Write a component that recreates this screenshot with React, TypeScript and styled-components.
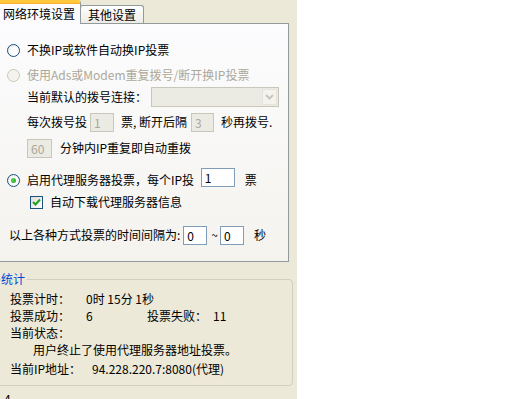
import styled, { createGlobalStyle } from "styled-components";

const GlobalStyle = createGlobalStyle`
  html, body {
    margin: 0;
    padding: 0;
    background: #ffffff;
    overflow: hidden;
  }
  body {
    font-family: "Noto Sans CJK SC", "Liberation Sans", sans-serif;
    font-size: 12px;
    color: #000000;
  }
`;

const Screen = styled.div`
  display: flex;
  width: 512px;
  height: 399px;
  overflow: hidden;
`;

const Pane = styled.div`
  flex: none;
  width: 297px;
  height: 399px;
  background: #ece9d8;
  display: flex;
  flex-direction: column;
  overflow: hidden;
`;

const TabStrip = styled.div`
  flex: none;
  display: flex;
  align-items: flex-end;
  height: 23px;
  margin-left: -2px;
  position: relative;
  z-index: 1;
`;

const Tab = styled.div<{ $active?: boolean }>`
  box-sizing: border-box;
  display: flex;
  align-items: center;
  white-space: nowrap;
  border: 1px solid #919b9c;
  border-bottom: none;
  border-radius: 3px 3px 0 0;
  ${(p) =>
    p.$active
      ? `
    height: 24px;
    margin-bottom: -1px;
    padding: 0 5px 0 4px;
    background: #fcfcfe;
    border-top: 3px solid #ffc83c;
    box-shadow: inset 0 1px 0 #f7b232;
  `
      : `
    height: 18px;
    padding: 0 7px 0 7px;
    margin-left: -1px;
    background: linear-gradient(#ffffff, #ecebe6);
  `}
`;

const TabPage = styled.div`
  box-sizing: border-box;
  flex: none;
  margin: 0 8px 0 -2px;
  height: 239px;
  border: 1px solid #919b9c;
  background: linear-gradient(#fcfcfe, #f4f3ee);
  padding: 16px 0 0 2px;
  display: flex;
  flex-direction: column;
`;

const Row = styled.div<{ $gap?: number; $indent?: number }>`
  display: flex;
  align-items: center;
  height: 20px;
  margin-top: ${(p) => p.$gap ?? 0}px;
  padding-left: ${(p) => p.$indent ?? 0}px;
  white-space: pre;
`;

const Text = styled.span<{ $disabled?: boolean; $pad?: number }>`
  color: ${(p) => (p.$disabled ? "#aca899" : "#000000")};
  margin-left: ${(p) => p.$pad ?? 0}px;
  line-height: 14px;
`;

const Radio = styled.span<{ $checked?: boolean; $disabled?: boolean }>`
  box-sizing: border-box;
  width: 13px;
  height: 13px;
  border-radius: 50%;
  margin: 0 7px 0 6px;
  border: 1px solid ${(p) => (p.$disabled ? "#cac8bb" : "#1c5180")};
  background: ${(p) =>
    p.$disabled
      ? "#f4f3ee"
      : "radial-gradient(circle at 60% 60%, #ffffff 40%, #dcdcd7 100%)"};
  display: flex;
  align-items: center;
  justify-content: center;
  &::after {
    content: "";
    display: ${(p) => (p.$checked ? "block" : "none")};
    width: 5px;
    height: 5px;
    border-radius: 50%;
    background: radial-gradient(circle at 40% 40%, #55d551, #21a121);
  }
`;

const Check = styled.span`
  box-sizing: border-box;
  width: 13px;
  height: 13px;
  border: 1px solid #1c5180;
  background: linear-gradient(135deg, #dcdcd7, #ffffff);
  margin: 0 7px 0 0;
  display: flex;
  align-items: center;
  justify-content: center;
`;

const Field = styled.input<{ $w: number; $pad?: number; $lift?: number }>`
  box-sizing: border-box;
  width: ${(p) => p.$w}px;
  height: 19px;
  margin: 0 0 0 ${(p) => p.$pad ?? 0}px;
  position: relative;
  top: ${(p) => -(p.$lift ?? 0)}px;
  padding: 0 3px;
  font: inherit;
  font-size: 12px;
  border: 1px solid #7f9db9;
  background: #ffffff;
  color: #000000;
  outline: none;
  &:disabled {
    border-color: #c9c7ba;
    background: #ebebe4;
    color: #aca899;
  }
`;

const Combo = styled.div`
  box-sizing: border-box;
  display: flex;
  justify-content: flex-end;
  width: 128px;
  height: 20px;
  margin-left: 4px;
  border: 1px solid #c9c7ba;
  background: #ebebe4;
  padding: 1px;
`;

const ComboButton = styled.div`
  width: 15px;
  height: 16px;
  background: #f4f3ee;
  border: 1px solid #e4e3dc;
  box-sizing: border-box;
  display: flex;
  align-items: center;
  justify-content: center;
`;

const GroupBox = styled.fieldset`
  flex: none;
  margin: 9px 4px 0 -3px;
  padding: 3px 0 8px 12px;
  border: 1px solid #d0d0bf;
  border-radius: 4px;
  min-width: 0;
`;

const Legend = styled.legend`
  margin-left: -9px;
  padding: 0 2px 0 0;
  color: #0046d5;
  line-height: 16px;
`;

const StatRow = styled.div<{ $gap?: number; $indent?: number }>`
  display: flex;
  align-items: center;
  height: 17px;
  margin-top: ${(p) => p.$gap ?? 0}px;
  padding-left: ${(p) => p.$indent ?? 0}px;
  white-space: pre;
`;

const StatLabel = styled.span<{ $w?: number }>`
  display: inline-block;
  width: ${(p) => p.$w ?? 76}px;
`;

const Footer = styled.div`
  flex: none;
  padding: 6px 0 0 4px;
  line-height: 14px;
`;

const Blank = styled.div`
  flex: 1;
  background: #ffffff;
`;

export default function App() {
  return (
    <>
      <GlobalStyle />
      <Screen>
        <Pane>
          <TabStrip>
            <Tab $active>网络环境设置</Tab>
            <Tab>其他设置</Tab>
          </TabStrip>
          <TabPage>
            <Row>
              <Radio />
              <Text>不换IP或软件自动换IP投票</Text>
            </Row>
            <Row $gap={5}>
              <Radio $disabled />
              <Text $disabled>使用Ads或Modem重复拨号/断开换IP投票</Text>
            </Row>
            <Row $gap={2} $indent={26}>
              <Text>当前默认的拨号连接：</Text>
              <Combo>
                <ComboButton>
                  <svg width="9" height="6" viewBox="0 0 9 6">
                    <path d="M1 1 L4.5 4.5 L8 1" fill="none" stroke="#c9c7ba" strokeWidth="2" />
                  </svg>
                </ComboButton>
              </Combo>
            </Row>
            <Row $gap={5} $indent={26}>
              <Text>每次拨号投</Text>
              <Field $w={24} $pad={3} defaultValue="1" disabled />
              <Text $pad={7}>票, 断开后隔</Text>
              <Field $w={23} $pad={4} defaultValue="3" disabled />
              <Text $pad={7}>秒再拨号.</Text>
            </Row>
            <Row $gap={6} $indent={26}>
              <Field $w={25} defaultValue="60" disabled />
              <Text $pad={8}>分钟内IP重复即自动重拨</Text>
            </Row>
            <Row $gap={12}>
              <Radio $checked />
              <Text>启用代理服务器投票，每个IP投 </Text>
              <Field $w={34} $pad={4} $lift={3} defaultValue="1" readOnly />
              <Text $pad={10}>票</Text>
            </Row>
            <Row $gap={2} $indent={29}>
              <Check>
                <svg width="9" height="9" viewBox="0 0 9 9">
                  <path d="M1 4 L3.5 6.5 L8 1.5" fill="none" stroke="#21a121" strokeWidth="2" />
                </svg>
              </Check>
              <Text>自动下载代理服务器信息</Text>
            </Row>
            <Row $gap={13} $indent={8}>
              <Text>以上各种方式投票的时间间隔为:</Text>
              <Field $w={24} $pad={3} defaultValue="0" readOnly />
              <Text $pad={4}>~</Text>
              <Field $w={24} $pad={2} defaultValue="0" readOnly />
              <Text $pad={10}>秒</Text>
            </Row>
          </TabPage>
          <GroupBox>
            <Legend>统计</Legend>
            <StatRow>
              <StatLabel>投票计时：</StatLabel>
              <span>0时 15分 1秒</span>
            </StatRow>
            <StatRow>
              <StatLabel>投票成功：</StatLabel>
              <StatLabel $w={61}>6</StatLabel>
              <StatLabel $w={66}>投票失败：</StatLabel>
              <span>11</span>
            </StatRow>
            <StatRow>
              <span>当前状态：</span>
            </StatRow>
            <StatRow $indent={23}>
              <span>用户终止了使用代理服务器地址投票。</span>
            </StatRow>
            <StatRow $gap={2}>
              <StatLabel $w={82}>当前IP地址：</StatLabel>
              <span>94.228.220.7:8080(代理)</span>
            </StatRow>
          </GroupBox>
          <Footer>4</Footer>
        </Pane>
        <Blank />
      </Screen>
    </>
  );
}
